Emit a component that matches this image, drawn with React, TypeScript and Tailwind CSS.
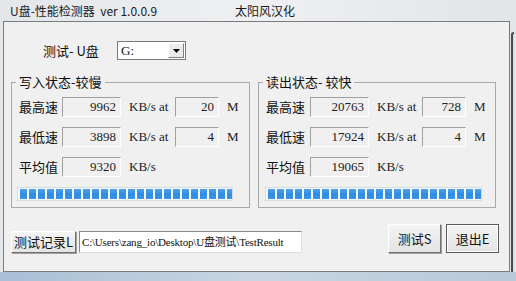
import React from "react";

const cjk = { fontFamily: '"Noto Sans CJK SC", "Liberation Sans", sans-serif' };
const serif = { fontFamily: '"Liberation Serif", "Noto Sans CJK SC", serif' };

function Box({ value, w }: { value: string; w: string }) {
  return (
    <div
      className={`${w} h-[20px] border border-t-[#a0a0a0] border-l-[#a0a0a0] border-b-white border-r-white bg-[#f0f0f0] flex items-center justify-end pr-[4px] text-[13px] text-[#222]`}
      style={serif}
    >
      {value}
    </div>
  );
}

function Row({
  label,
  v1,
  v2,
  labelW,
  midW,
}: {
  label: string;
  v1: string;
  v2?: string;
  labelW: string;
  midW: string;
}) {
  return (
    <div className="flex items-center h-[20px]">
      <span className={`${labelW} text-[13px] text-[#111]`} style={cjk}>
        {label}
      </span>
      <Box value={v1} w="w-[59px]" />
      {v2 !== undefined ? (
        <>
          <span className={`${midW} pl-[8px] text-[13px] text-[#222]`} style={serif}>
            KB/s at
          </span>
          <Box value={v2} w="w-[44px]" />
          <span className="pl-[8px] text-[13px] text-[#222]" style={serif}>
            M
          </span>
        </>
      ) : (
        <span className="pl-[8px] text-[13px] text-[#222]" style={serif}>
          KB/s
        </span>
      )}
    </div>
  );
}

function Progress({ w, n }: { w: string; n: number }) {
  return (
    <div className={`${w} h-[14px] border border-[#d6dde4] bg-[#f7f9fb] flex items-center gap-[2px] pl-[2px] overflow-hidden`}>
      {Array.from({ length: n }).map((_, i) => (
        <div key={i} className="w-[7px] h-[10px] shrink-0 bg-gradient-to-b from-[#4da3f0] via-[#2f8be2] to-[#3a95ea]" />
      ))}
    </div>
  );
}

function Group({
  title,
  rows,
  labelW,
  midW,
  barW,
  barPl,
  n,
  w,
}: {
  title: string;
  rows: [string, string, string?][];
  labelW: string;
  midW: string;
  barW: string;
  barPl: string;
  n: number;
  w: string;
}) {
  return (
    <fieldset className={`${w} h-[133px] border border-[#a9a9a9] m-0 p-0 min-w-0`}>
      <legend className="ml-[4px] px-[3px] text-[13px] leading-[14px] text-[#111]" style={cjk}>
        {title}
      </legend>
      <div className="flex flex-col gap-[10px] pl-[7px] pt-[8px]">
        {rows.map((r, i) => (
          <Row key={i} label={r[0]} v1={r[1]} v2={r[2]} labelW={labelW} midW={midW} />
        ))}
      </div>
      <div className={`${barPl} pt-[10px]`}>
        <Progress w={barW} n={n} />
      </div>
    </fieldset>
  );
}

function Btn({ children, w, h, dflt }: { children: React.ReactNode; w: string; h: string; dflt?: boolean }) {
  return (
    <div
      className={`${w} ${h} flex items-center justify-center text-[13px] text-[#111] bg-gradient-to-b from-[#f4f4f4] to-[#e4e4e4] border ${
        dflt ? "border-[#5a5a5a] shadow-[inset_0_0_0_1px_#ffffff]" : "border-t-white border-l-white border-b-[#707070] border-r-[#707070] shadow-[1px_1px_0_#a0a0a0]"
      }`}
      style={cjk}
    >
      {children}
    </div>
  );
}

export default function App() {
  return (
    <div className="w-[516px] h-[281px] overflow-hidden flex flex-col bg-gradient-to-r from-[#e4e7ea] via-[#eef0f2] to-[#e2e5e8]">
      <div className="h-[21px] flex items-center pl-[10px] text-[12px] text-[#1a1a1a]" style={cjk}>
        <span className="w-[225px] whitespace-pre">U盘-性能检测器  ver 1.0.0.9</span>
        <span>太阳风汉化</span>
      </div>
      <div className="flex h-[251px]">
        <div className="w-[3px]" />
        <div className="w-[507px] h-[251px] border border-[#7b7b7b] bg-[#f0f0f0] flex flex-col">
          <div className="flex items-center h-[19px] mt-[19px] pl-[39px]">
            <span className="w-[74px] text-[13px] text-[#111]" style={cjk}>
              测试- U盘
            </span>
            <div className="w-[69px] h-[19px] border border-[#7a7a7a] bg-white flex items-center">
              <span className="flex-1 pl-[3px] text-[13px] text-[#111]" style={serif}>
                G:
              </span>
              <div className="w-[16px] h-[15px] mr-[1px] border border-t-white border-l-white border-b-[#808080] border-r-[#808080] bg-[#ececec] flex items-center justify-center">
                <svg width="7" height="4" viewBox="0 0 7 4">
                  <path d="M0 0 H7 L3.5 4 Z" fill="#000" />
                </svg>
              </div>
            </div>
          </div>
          <div className="flex gap-[8px] pl-[7px] mt-[15px]">
            <Group
              title="写入状态-较慢"
              rows={[
                ["最高速", "9962", "20"],
                ["最低速", "3898", "4"],
                ["平均值", "9320"],
              ]}
              labelW="w-[43px]"
              midW="w-[54px]"
              barW="w-[216px]"
              barPl="pl-[5px]"
              n={24}
              w="w-[239px]"
            />
            <Group
              title="读出状态- 较快"
              rows={[
                ["最高速", "20763", "728"],
                ["最低速", "17924", "4"],
                ["平均值", "19065"],
              ]}
              labelW="w-[44px]"
              midW="w-[53px]"
              barW="w-[217px]"
              barPl="pl-[6px]"
              n={24}
              w="w-[238px]"
            />
          </div>
          <div className="flex items-end mt-[16px] pl-[7px]">
            <Btn w="w-[65px]" h="h-[22px]">
              测试记录L
            </Btn>
            <div
              className="ml-[3px] w-[223px] h-[22px] border border-t-[#8a8a8a] border-l-[#8a8a8a] border-b-[#e0e0e0] border-r-[#e0e0e0] bg-white flex items-center pl-[2px] text-[11px] tracking-[-0.2px] text-[#111] whitespace-nowrap overflow-hidden"
              style={serif}
            >
              C:\Users\zang_io\Desktop\U盘测试\TestResult
            </div>
            <div className="ml-[86px]">
              <Btn w="w-[53px]" h="h-[29px]">
                测试S
              </Btn>
            </div>
            <div className="ml-[5px]">
              <Btn w="w-[53px]" h="h-[29px]" dflt>
                退出E
              </Btn>
            </div>
          </div>
        </div>
        <div className="flex-1 pt-[11px] pl-[1px]">
          <div className="w-[3px] h-full border-l-2 border-t-2 border-[#4a4a4a] rounded-tl-[4px] bg-[#d8d8d8]" />
        </div>
      </div>
      <div className="flex-1 bg-gradient-to-r from-[#a9bfd6] via-[#c9d6e2] to-[#b8c8d8]" />
    </div>
  );
}
